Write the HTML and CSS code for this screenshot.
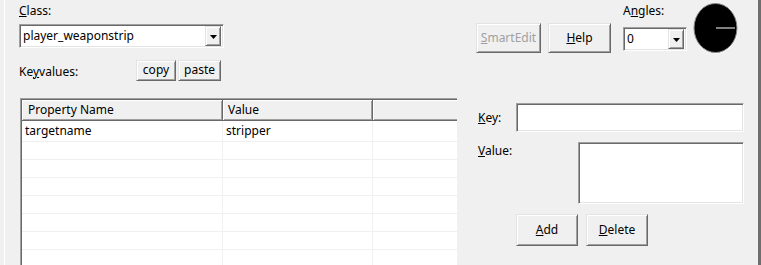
FILE: index.html
```html
<!DOCTYPE html>
<html>
<head>
<meta charset="utf-8">
<link rel="stylesheet" href="styles.css">
</head>
<body>
<div class="dialog">
  <div class="top">
    <div class="left-col">
      <div class="label"><u>C</u>lass:</div>
      <div class="combo class-combo">
        <span class="combo-text">player_weaponstrip</span>
        <span class="drop"><svg width="7" height="4" viewBox="0 0 7 4"><polygon points="0,0 7,0 3.5,4" fill="#000"/></svg></span>
      </div>
      <div class="kv-row">
        <span class="label kv-label">Ke<u>y</u>values:</span>
        <div class="btn small copy">copy</div>
        <div class="btn small paste">paste</div>
      </div>
    </div>
    <div class="btn big smartedit disabled"><u>S</u>martEdit</div>
    <div class="btn big help"><u>H</u>elp</div>
    <div class="angles">
      <div class="label">A<u>n</u>gles:</div>
      <div class="combo angle-combo">
        <span class="combo-text">0</span>
        <span class="drop"><svg width="7" height="4" viewBox="0 0 7 4"><polygon points="0,0 7,0 3.5,4" fill="#000"/></svg></span>
      </div>
    </div>
    <svg class="dial" width="46" height="53" viewBox="0 0 46 53">
      <ellipse cx="23" cy="26.5" rx="22" ry="25" fill="#fff"/>
      <ellipse cx="22.5" cy="26" rx="21.5" ry="24.5" fill="#000" stroke="#8a8a8a" stroke-width="1"/>
      <line x1="23" y1="26" x2="42" y2="26" stroke="#fff" stroke-width="1"/>
    </svg>
  </div>
  <div class="bottom">
    <div class="list">
      <div class="hdr">
        <div class="hcell c1">Property Name</div>
        <div class="hcell c2">Value</div>
        <div class="hcell c3"></div>
      </div>
      <div class="row first"><div class="cell c1">targetname</div><div class="cell c2">stripper</div><div class="cell c3"></div></div>
      <div class="row"><div class="cell c1"></div><div class="cell c2"></div><div class="cell c3"></div></div>
      <div class="row"><div class="cell c1"></div><div class="cell c2"></div><div class="cell c3"></div></div>
      <div class="row"><div class="cell c1"></div><div class="cell c2"></div><div class="cell c3"></div></div>
      <div class="row"><div class="cell c1"></div><div class="cell c2"></div><div class="cell c3"></div></div>
      <div class="row"><div class="cell c1"></div><div class="cell c2"></div><div class="cell c3"></div></div>
      <div class="row"><div class="cell c1"></div><div class="cell c2"></div><div class="cell c3"></div></div>
      <div class="row"><div class="cell c1"></div><div class="cell c2"></div><div class="cell c3"></div></div>
      <div class="row"><div class="cell c1"></div><div class="cell c2"></div><div class="cell c3"></div></div>
    </div>
    <div class="side">
      <div class="key-row">
        <span class="label side-label"><u>K</u>ey:</span>
        <div class="field key-field"></div>
      </div>
      <div class="value-row">
        <span class="label value-label"><u>V</u>alue:</span>
        <div class="field value-field"></div>
      </div>
      <div class="action-row">
        <div class="btn act"><u>A</u>dd</div>
        <div class="btn act delete"><u>D</u>elete</div>
      </div>
    </div>
  </div>
</div>
</body>
</html>
```

FILE: styles.css
```css
html, body {
  margin: 0;
  padding: 0;
  background: #f0f0f0;
  width: 761px;
  height: 265px;
  overflow: hidden;
}
body {
  font-family: "Noto Sans", "Liberation Sans", sans-serif;
  font-size: 12px;
  color: #000;
}
u {
  text-decoration: underline;
  text-underline-offset: 1px;
}
.dialog {
  box-sizing: border-box;
  margin-left: 4px;
  width: 757px;
  height: 265px;
  border-left: 1px solid #ffffff;
  border-right: 3px solid #6e6e6e;
  padding-left: 14px;
  overflow: hidden;
}
.label {
  line-height: 16px;
  height: 16px;
  white-space: nowrap;
}
.top {
  display: flex;
  align-items: flex-start;
  height: 98px;
}
.left-col {
  width: 204px;
  padding-top: 3px;
}
.combo {
  box-sizing: border-box;
  display: flex;
  align-items: center;
  background: #fff;
  border: 1px solid;
  border-color: #a0a0a0 #ffffff #ffffff #a0a0a0;
  box-shadow: inset 1px 1px #696969, inset -1px -1px #e3e3e3;
  padding: 2px 2px 2px 3px;
}
.class-combo {
  margin-top: 5px;
  width: 205px;
  height: 24px;
}
.combo-text {
  flex: 1;
  line-height: 20px;
  white-space: nowrap;
}
.drop {
  box-sizing: border-box;
  width: 16px;
  height: 20px;
  display: flex;
  align-items: center;
  justify-content: center;
  background: #f0f0f0;
  border: 1px solid;
  border-color: #e3e3e3 #696969 #696969 #e3e3e3;
  box-shadow: inset 1px 1px #fff, inset -1px -1px #a0a0a0;
}
.drop svg { display: block; margin-top: 1px; }
.kv-row {
  display: flex;
  align-items: flex-start;
  margin-top: 12px;
}
.kv-label {
  width: 117px;
  margin-top: 3px;
  padding-top: 1px;
}
.btn {
  box-sizing: border-box;
  display: flex;
  align-items: center;
  justify-content: center;
  background: #f0f0f0;
  border: 1px solid;
  border-color: #e3e3e3 #696969 #696969 #e3e3e3;
  box-shadow: inset 1px 1px #fff, inset -1px -1px #a0a0a0;
  white-space: nowrap;
  line-height: 16px;
}
.small {
  height: 21px;
  padding-bottom: 2px;
}
.copy { width: 40px; }
.paste { width: 43px; margin-left: 2px; }
.big {
  margin-top: 23px;
  height: 30px;
}
.smartedit {
  margin-left: 253px;
  width: 65px;
}
.disabled { color: #a0a0a0; }
.help {
  margin-left: 7px;
  width: 63px;
}
.angles {
  margin-left: 12px;
  width: 64px;
  padding-top: 3px;
}
.angle-combo {
  margin-top: 8px;
  width: 64px;
  height: 24px;
}
.dial {
  display: block;
  margin-left: 6px;
  margin-top: 2px;
}
.bottom {
  display: flex;
  align-items: flex-start;
}
.list {
  box-sizing: border-box;
  margin-left: 1px;
  width: 437px;
  height: 180px;
  background: #fff;
  border-top: 1px solid #a0a0a0;
  border-left: 1px solid #a0a0a0;
  box-shadow: inset 1px 1px #696969;
  padding: 1px 0 0 1px;
  overflow: hidden;
}
.hdr {
  display: flex;
  height: 21px;
}
.hcell {
  box-sizing: border-box;
  height: 21px;
  background: #f0f0f0;
  border-right: 1px solid #696969;
  border-bottom: 1px solid #696969;
  box-shadow: inset 1px 1px #fff, inset -1px -1px #a0a0a0;
  padding-left: 6px;
  line-height: 19px;
  white-space: nowrap;
}
.c1 { width: 201px; flex: none; }
.c2 { width: 150px; flex: none; }
.c3 { flex: 1; }
.hcell.c2 { padding-left: 5px; }
.hcell.c3 { border-right: none; box-shadow: inset 1px 1px #fff, inset 0 -1px #a0a0a0; }
.row {
  display: flex;
  height: 18px;
}
.row.first { height: 21px; }
.cell {
  box-sizing: border-box;
  height: 100%;
  border-bottom: 1px solid #f0f0f0;
  border-right: 1px solid #f0f0f0;
  padding-left: 3px;
  line-height: 19px;
  white-space: nowrap;
}
.cell.c2 { padding-left: 3px; }
.cell.c3 { border-right: none; }
.side {
  margin-left: 21px;
  width: 266px;
  padding-top: 5px;
}
.key-row {
  display: flex;
  align-items: center;
}
.side-label { width: 38px; }
.field {
  box-sizing: border-box;
  background: #fff;
  border: 1px solid;
  border-color: #a0a0a0 #ffffff #ffffff #a0a0a0;
  box-shadow: inset 1px 1px #696969, inset -1px -1px #e3e3e3;
}
.key-field {
  width: 228px;
  height: 29px;
}
.value-row {
  display: flex;
  align-items: flex-start;
  margin-top: 10px;
}
.value-label {
  width: 100px;
  padding-top: 1px;
}
.value-field {
  width: 166px;
  height: 62px;
}
.action-row {
  display: flex;
  margin-top: 10px;
  margin-left: 38px;
}
.act {
  width: 62px;
  height: 32px;
}
.delete { margin-left: 8px; }
```
